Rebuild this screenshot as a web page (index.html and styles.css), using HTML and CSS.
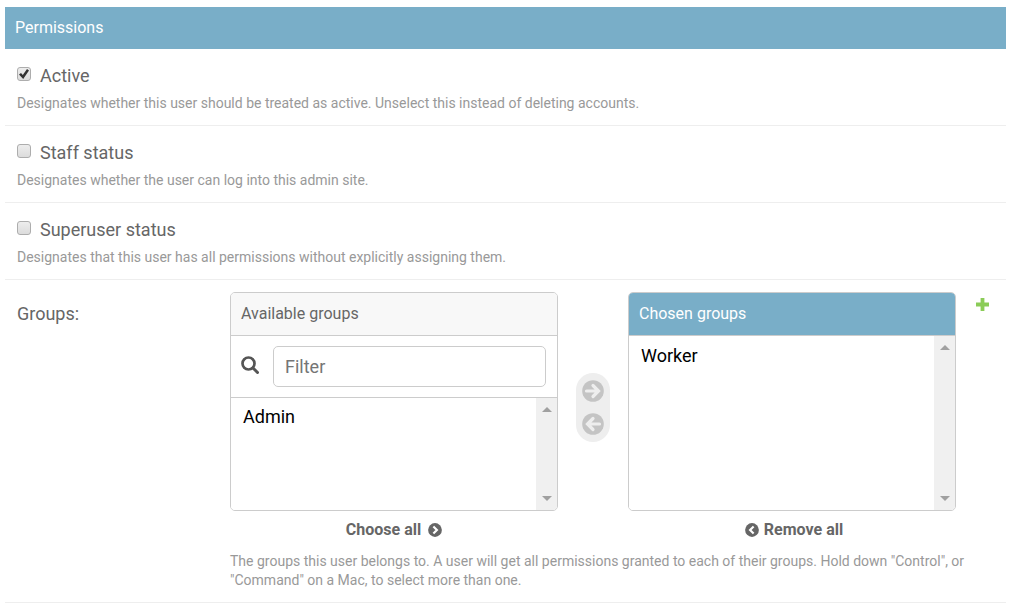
FILE: index.html
```html
<!DOCTYPE html>
<html lang="en">
<head>
<meta charset="utf-8">
<meta name="viewport" content="width=device-width, initial-scale=1">
<title>Permissions</title>
<link rel="stylesheet" href="styles.css">
</head>
<body>
<form class="module">
  <h2 class="module-title">Permissions</h2>

  <div class="form-row">
    <div class="check-line">
      <input class="check" type="checkbox" id="active" checked aria-describedby="active-help">
      <label class="check-label" for="active">Active</label>
    </div>
    <p class="help" id="active-help">Designates whether this user should be treated as active. Unselect this instead of deleting accounts.</p>
  </div>

  <div class="form-row">
    <div class="check-line">
      <input class="check" type="checkbox" id="staff" aria-describedby="staff-help">
      <label class="check-label" for="staff">Staff status</label>
    </div>
    <p class="help" id="staff-help">Designates whether the user can log into this admin site.</p>
  </div>

  <div class="form-row">
    <div class="check-line">
      <input class="check" type="checkbox" id="superuser" aria-describedby="superuser-help">
      <label class="check-label" for="superuser">Superuser status</label>
    </div>
    <p class="help" id="superuser-help">Designates that this user has all permissions without explicitly assigning them.</p>
  </div>

  <div class="form-row groups-row">
    <label class="groups-label" for="chosen">Groups:</label>
    <div class="groups-field">
      <div class="selector-line">
        <div class="selector">
          <div class="selector-side">
            <div class="box">
              <h3 class="box-title"><label for="available">Available groups</label></h3>
              <div class="filter">
                <label class="filter-icon" for="filter" aria-label="Filter groups">
                  <svg width="18" height="18" viewBox="0 0 18 18" fill="none" stroke="#555" aria-hidden="true"><circle cx="7.5" cy="7.5" r="6" stroke-width="2.7"/><path d="M12 12l4.5 4.5" stroke-width="3" stroke-linecap="round"/></svg>
                </label>
                <input class="filter-input" type="text" id="filter" placeholder="Filter">
              </div>
              <div class="list">
                <select class="options" id="available" multiple><option>Admin</option></select>
                <div class="scrollbar" aria-hidden="true">
                  <svg width="10" height="5" viewBox="0 0 10 5" fill="#a0a0a0"><path d="M0 5L5 0L10 5z"/></svg>
                  <svg width="10" height="5" viewBox="0 0 10 5" fill="#a0a0a0"><path d="M0 0h10L5 5z"/></svg>
                </div>
              </div>
            </div>
            <a class="all-link" href="#">Choose all
              <svg width="14" height="14" viewBox="0 0 13 13" aria-hidden="true"><circle cx="6.5" cy="6.5" r="6.4" fill="#666"/><path d="M5 3.2L8.300 6.500L5 9.800" fill="none" stroke="#fff" stroke-width="2"/></svg>
            </a>
          </div>

          <div class="chooser">
            <button class="move" type="button" aria-label="Choose">
              <svg width="22" height="22" viewBox="0 0 22 22" aria-hidden="true"><circle cx="11" cy="11" r="10.8" fill="#c4c4c4"/><path d="M4.500 11H16M11 5.500L16.500 11L11 16.500" fill="none" stroke="#eee" stroke-width="3.2" stroke-linecap="round"/></svg>
            </button>
            <button class="move" type="button" aria-label="Remove">
              <svg width="22" height="22" viewBox="0 0 22 22" aria-hidden="true"><circle cx="11" cy="11" r="10.8" fill="#c4c4c4"/><path d="M17.500 11H6M11 5.500L5.500 11L11 16.500" fill="none" stroke="#eee" stroke-width="3.2" stroke-linecap="round"/></svg>
            </button>
          </div>

          <div class="selector-side">
            <div class="box">
              <h3 class="box-title box-title-chosen">Chosen groups</h3>
              <div class="list">
                <select class="options options-chosen" id="chosen" multiple><option>Worker</option></select>
                <div class="scrollbar" aria-hidden="true">
                  <svg width="10" height="5" viewBox="0 0 10 5" fill="#a0a0a0"><path d="M0 5L5 0L10 5z"/></svg>
                  <svg width="10" height="5" viewBox="0 0 10 5" fill="#a0a0a0"><path d="M0 0h10L5 5z"/></svg>
                </div>
              </div>
            </div>
            <a class="all-link remove-all" href="#">
              <svg width="14" height="14" viewBox="0 0 13 13" aria-hidden="true"><circle cx="6.5" cy="6.5" r="6.4" fill="#666"/><path d="M8 3.2L4.700 6.500L8 9.800" fill="none" stroke="#fff" stroke-width="2"/></svg>
              Remove all</a>
          </div>
        </div>
        <a class="add" href="#" aria-label="Add another group">
          <svg width="13" height="13" viewBox="0 0 13 13" aria-hidden="true"><path d="M4.600 0h3.800v4.600H13v3.800H8.400V13H4.600V8.400H0V4.600h4.600z" fill="#8bcc58"/></svg>
        </a>
      </div>
      <p class="help groups-help">The groups this user belongs to. A user will get all permissions granted to each of their groups. Hold down "Control", or "Command" on a Mac, to select more than one.</p>
    </div>
  </div>
</form>
</body>
</html>
```
FILE: styles.css
```css
* {
  box-sizing: border-box;
}

body {
  margin: 0;
  padding: 7px 6px 5px 5px;
  background: #fff;
  color: #666;
  font-family: Roboto, "Liberation Sans", sans-serif;
  font-size: 18px;
}

.module-title {
  margin: 0;
  padding: 11px 10px;
  background: #79aec8;
  color: #fff;
  font-size: 16px;
  font-weight: 400;
  line-height: 20px;
}

.form-row {
  padding: 15px 12px 12px;
  border-bottom: 1px solid #eee;
}

.check-line {
  display: flex;
  align-items: center;
  gap: 9px;
  line-height: 24px;
}

.check {
  appearance: none;
  display: grid;
  place-items: center;
  width: 14px;
  height: 14px;
  margin: 0 0 4px;
  border: 1px solid #adadad;
  border-radius: 3px;
  background: linear-gradient(#ededed, #dcdcdc);
}

.check:checked::before {
  content: "";
  width: 10px;
  height: 10px;
  background: #333;
  clip-path: polygon(0 55%, 20% 40%, 38% 60%, 80% 0, 100% 15%, 42% 100%);
}

.help {
  margin: 5px 0 0;
  color: #999;
  font-size: 14px;
  line-height: 20px;
}

.groups-row {
  display: flex;
  padding-top: 12px;
}

.groups-label {
  flex: none;
  width: 213px;
  padding-top: 10px;
  line-height: 24px;
}

.groups-field {
  flex: 1;
  min-width: 0;
}

.selector-line {
  display: flex;
  gap: 20px;
  padding-right: 5px;
}

.selector {
  flex: 1;
  display: grid;
  grid-template-columns: 1fr 34px 1fr;
  column-gap: 18px;
}

.selector-side {
  display: flex;
  flex-direction: column;
  align-items: center;
  min-width: 0;
}

.box {
  display: flex;
  flex-direction: column;
  width: 100%;
  flex: 1;
  overflow: hidden;
  border: 1px solid #ccc;
  border-radius: 5px;
}

.box-title {
  margin: 0;
  padding: 11px 10px;
  border-bottom: 1px solid #ccc;
  background: #f8f8f8;
  font-size: 16px;
  font-weight: 400;
  line-height: 20px;
}

.box-title-chosen {
  background: #79aec8;
  color: #fff;
}

.filter {
  display: flex;
  align-items: center;
  gap: 14px;
  padding: 10px 11px 10px 10px;
  border-bottom: 1px solid #ccc;
}

.filter-icon {
  display: flex;
  padding-bottom: 4px;
}

.filter-input {
  flex: 1;
  min-width: 0;
  height: 41px;
  padding: 0 11px;
  border: 1px solid #ccc;
  border-radius: 5px;
  background: #fff;
  color: #333;
  font: inherit;
}

.filter-input::placeholder {
  color: #757575;
}

.list {
  display: flex;
  flex: 1;
}

.options {
  flex: 1;
  min-width: 0;
  height: 112px;
  padding: 8px 12px;
  overflow: hidden;
  border: 0;
  outline: 0;
  background: #fff;
  color: #000;
  font: inherit;
}

.options option {
  min-height: 24px;
  padding: 0;
  line-height: 24px;
}

.options-chosen {
  height: auto;
  padding-top: 9px;
}

.scrollbar {
  display: flex;
  flex-direction: column;
  align-items: center;
  justify-content: space-between;
  width: 21px;
  padding: 9px 0;
  background: #f0f0f0;
}

.all-link {
  display: flex;
  align-items: center;
  gap: 7px;
  padding-top: 8px;
  color: #666;
  font-size: 16px;
  font-weight: 700;
  line-height: 22px;
  text-decoration: none;
}

.remove-all {
  gap: 5px;
  padding-left: 4px;
}

.chooser {
  display: flex;
  flex-direction: column;
  align-self: start;
  gap: 11px;
  margin-top: 81px;
  padding: 7px 0;
  border-radius: 17px;
  background: #eee;
}

.move {
  display: flex;
  justify-content: center;
  padding: 0;
  border: 0;
  background: none;
}

.add {
  display: flex;
  align-self: start;
  padding-top: 6px;
}

.groups-help {
  margin-top: 11px;
  line-height: 19px;
}
```
